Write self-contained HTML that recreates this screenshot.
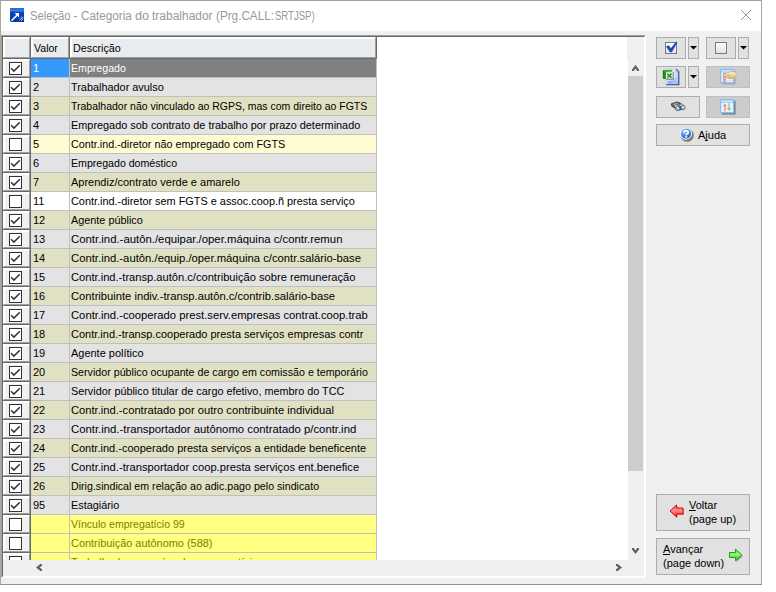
<!DOCTYPE html>
<html><head><meta charset="utf-8">
<style>
*{box-sizing:border-box;margin:0;padding:0}
html,body{width:776px;height:592px;overflow:hidden;background:#fff;font-family:"Liberation Sans",sans-serif;}
.abs{position:absolute}
#win{position:absolute;left:0;top:0;width:762px;height:585px;background:#f0f0f0;}
.bl{position:absolute}
#title{position:absolute;left:1px;top:1px;width:760px;height:30px;background:#fff}
#ttext{position:absolute;left:0;top:8px;font-size:12px;color:#999;white-space:nowrap}
.tw{position:absolute;top:0;transform-origin:0 0}
#grid{position:absolute;left:1px;top:35px;width:645px;height:543px;border-top:1px solid #a0a0a0;border-left:1px solid #a0a0a0;border-right:1px solid #fff;border-bottom:1px solid #fff;}
#gi{position:absolute;left:0;top:0;width:643px;height:541px;border-top:1px solid #696969;border-left:1px solid #696969;border-right:1px solid #fff;border-bottom:1px solid #fff;background:#fff;overflow:hidden}
/* inner origin = (3,37) */
.hd{position:absolute;top:0;height:21px;background:#e9ecef;border-top:1px solid #fff;border-left:1px solid #fff;border-right:1px solid #a0a0a0;border-bottom:1px solid #a0a0a0;box-shadow:1px 1px 0 #696969, 1px 0 0 #696969, 0 1px 0 #696969, inset 1px 1px 0 #fff;font-size:11px;color:#000;}
.hd span{position:absolute;left:2px;top:4px;transform-origin:0 0}
.r{position:absolute;left:0;height:19px;width:373px;font-size:11px}
.r .cbo{position:absolute;left:0;top:0;width:28px;height:19px;border-right:1px solid #696969;border-bottom:1px solid #696969}
.r .cb{position:absolute;left:0;top:0;width:27px;height:18px;background:#f0f0f0;border-top:1px solid #fff;border-left:1px solid #fff;border-right:1px solid #a0a0a0;border-bottom:1px solid #a0a0a0;box-shadow:inset 1px 1px 0 #fff}
.r .cb svg{position:absolute;left:5px;top:2px}
.r .v{position:absolute;left:28px;top:0;width:39px;height:19px;border-right:1px solid #c0c0c0;border-bottom:1px solid #c0c0c0;padding-left:2px;line-height:18px;white-space:nowrap}
.r .d{position:absolute;left:67px;top:0;width:307px;height:19px;border-right:1px solid #c0c0c0;border-bottom:1px solid #c0c0c0;padding-left:1px;line-height:18px;white-space:nowrap;overflow:hidden}
.g .v,.g .d{background:#e3e3e3}
.b .v,.b .d{background:#e0e0c3}
.ly .v,.ly .d{background:#fffcd2}
.w .v,.w .d{background:#fff}
.y .v,.y .d{background:#ffff80;color:#808000}
.sel .v{background:#3399ff;color:#fff}
.sel .d{background:#808080;color:#fff}
.btn{position:absolute;background:#e1e1e1;border:1px solid #adadad}
.dis{position:absolute;background:#cccccc;border:1px solid #c0c0c0}
.r .d span{display:inline-block;transform-origin:0 0}
.lbl{font-size:11px;color:#000;white-space:nowrap}
.lbl u{text-decoration:underline;text-decoration-skip-ink:none;text-underline-offset:1px}
</style></head><body>
<div id="win">
 <div class="bl" style="left:0;top:0;width:762px;height:1px;background:#a0a0a0"></div>
 <div class="bl" style="left:0;top:1px;width:1px;height:584px;background:#a9ab98"></div>
 <div class="bl" style="left:761px;top:1px;width:1px;height:584px;background:#a9ab98"></div>
 <div class="bl" style="left:0;top:584px;width:762px;height:1px;background:#8f8f8f"></div>
 <div id="title">
  <svg class="abs" style="left:9px;top:7px" width="14" height="14" viewBox="0 0 14 14">
   <defs><linearGradient id="ig" x1="0" y1="0" x2="0" y2="1"><stop offset="0" stop-color="#2a66d4"/><stop offset="0.22" stop-color="#3c7ee4"/><stop offset="0.3" stop-color="#0c44bc"/><stop offset="1" stop-color="#0636a8"/></linearGradient></defs>
   <path d="M0 0H14V14H1.5Q0 14 0 12.5Z" fill="url(#ig)"/>
   <path d="M4.6 5H9V9.4Z" fill="#fff"/>
   <path d="M1.4 12.8L7.6 6.6" stroke="#fff" stroke-width="1.5"/>
   <path d="M9.5 12.5L13 9M11 13L13.5 10.5M10 10.5L12 8.5" stroke="#a8c4f4" stroke-width="0.9"/>
  </svg>
  <div id="ttext"><span class="tw" style="left:28.86px;transform:scaleX(0.9366)">Seleção</span><span class="tw" style="left:72.40px;transform:scaleX(1.0)">-</span><span class="tw" style="left:79.52px;transform:scaleX(0.976)">Categoria</span><span class="tw" style="left:134.05px;transform:scaleX(1.0545)">do</span><span class="tw" style="left:150.60px;transform:scaleX(0.9983)">trabalhador</span><span class="tw" style="left:215.02px;transform:scaleX(0.9768)">(Prg.CALL:</span><span class="tw" style="left:273.80px;transform:scaleX(0.7957)">SRTJSP)</span></div>
  <svg class="abs" style="left:740px;top:9px" width="10" height="10" viewBox="0 0 10 10" fill="#969696"><rect x="0" y="0" width="1" height="1"/><rect x="9" y="0" width="1" height="1"/><rect x="1" y="1" width="1" height="1"/><rect x="8" y="1" width="1" height="1"/><rect x="2" y="2" width="1" height="1"/><rect x="7" y="2" width="1" height="1"/><rect x="3" y="3" width="1" height="1"/><rect x="6" y="3" width="1" height="1"/><rect x="4" y="4" width="1" height="1"/><rect x="5" y="4" width="1" height="1"/><rect x="5" y="5" width="1" height="1"/><rect x="4" y="5" width="1" height="1"/><rect x="6" y="6" width="1" height="1"/><rect x="3" y="6" width="1" height="1"/><rect x="7" y="7" width="1" height="1"/><rect x="2" y="7" width="1" height="1"/><rect x="8" y="8" width="1" height="1"/><rect x="1" y="8" width="1" height="1"/><rect x="9" y="9" width="1" height="1"/><rect x="0" y="9" width="1" height="1"/></svg>
 </div>
 <div id="grid"><div id="gi">
  <div class="hd" style="left:0;width:27px"></div>
  <div class="hd" style="left:28px;width:38px"><span style="transform:scaleX(0.96)">Valor</span></div>
  <div class="hd" style="left:67px;width:306px"><span style="transform:scaleX(0.978)">Descrição</span></div>
  <div class="r sel" style="top:22px"><div class="cbo"><div class="cb"><svg width="13" height="13" viewBox="0 0 13 13"><rect x="0.5" y="0.5" width="12" height="12" fill="#fff" stroke="#333"/><path d="M2.1 6.2 L4.9 9.1 L10.8 3.2" fill="none" stroke="#333" stroke-width="1.5"/></svg></div></div><div class="v">1</div><div class="d"><span style="transform:scaleX(0.9643)">Empregado</span></div></div>
<div class="r g" style="top:41px"><div class="cbo"><div class="cb"><svg width="13" height="13" viewBox="0 0 13 13"><rect x="0.5" y="0.5" width="12" height="12" fill="#fff" stroke="#333"/><path d="M2.1 6.2 L4.9 9.1 L10.8 3.2" fill="none" stroke="#333" stroke-width="1.5"/></svg></div></div><div class="v">2</div><div class="d"><span style="transform:scaleX(0.9892)">Trabalhador avulso</span></div></div>
<div class="r b" style="top:60px"><div class="cbo"><div class="cb"><svg width="13" height="13" viewBox="0 0 13 13"><rect x="0.5" y="0.5" width="12" height="12" fill="#fff" stroke="#333"/><path d="M2.1 6.2 L4.9 9.1 L10.8 3.2" fill="none" stroke="#333" stroke-width="1.5"/></svg></div></div><div class="v">3</div><div class="d"><span style="transform:scaleX(0.9532)">Trabalhador não vinculado ao RGPS, mas com direito ao FGTS</span></div></div>
<div class="r g" style="top:79px"><div class="cbo"><div class="cb"><svg width="13" height="13" viewBox="0 0 13 13"><rect x="0.5" y="0.5" width="12" height="12" fill="#fff" stroke="#333"/><path d="M2.1 6.2 L4.9 9.1 L10.8 3.2" fill="none" stroke="#333" stroke-width="1.5"/></svg></div></div><div class="v">4</div><div class="d"><span style="transform:scaleX(0.9897)">Empregado sob contrato de trabalho por prazo determinado</span></div></div>
<div class="r ly" style="top:98px"><div class="cbo"><div class="cb"><svg width="13" height="13" viewBox="0 0 13 13"><rect x="0.5" y="0.5" width="12" height="12" fill="#fff" stroke="#333"/></svg></div></div><div class="v">5</div><div class="d"><span style="transform:scaleX(0.9816)">Contr.ind.-diretor não empregado com FGTS</span></div></div>
<div class="r g" style="top:117px"><div class="cbo"><div class="cb"><svg width="13" height="13" viewBox="0 0 13 13"><rect x="0.5" y="0.5" width="12" height="12" fill="#fff" stroke="#333"/><path d="M2.1 6.2 L4.9 9.1 L10.8 3.2" fill="none" stroke="#333" stroke-width="1.5"/></svg></div></div><div class="v">6</div><div class="d"><span style="transform:scaleX(0.9633)">Empregado doméstico</span></div></div>
<div class="r b" style="top:136px"><div class="cbo"><div class="cb"><svg width="13" height="13" viewBox="0 0 13 13"><rect x="0.5" y="0.5" width="12" height="12" fill="#fff" stroke="#333"/><path d="M2.1 6.2 L4.9 9.1 L10.8 3.2" fill="none" stroke="#333" stroke-width="1.5"/></svg></div></div><div class="v">7</div><div class="d"><span style="transform:scaleX(1.0000)">Aprendiz/contrato verde e amarelo</span></div></div>
<div class="r w" style="top:155px"><div class="cbo"><div class="cb"><svg width="13" height="13" viewBox="0 0 13 13"><rect x="0.5" y="0.5" width="12" height="12" fill="#fff" stroke="#333"/></svg></div></div><div class="v">11</div><div class="d"><span style="transform:scaleX(0.9899)">Contr.ind.-diretor sem FGTS e assoc.coop.ñ presta serviço</span></div></div>
<div class="r b" style="top:174px"><div class="cbo"><div class="cb"><svg width="13" height="13" viewBox="0 0 13 13"><rect x="0.5" y="0.5" width="12" height="12" fill="#fff" stroke="#333"/><path d="M2.1 6.2 L4.9 9.1 L10.8 3.2" fill="none" stroke="#333" stroke-width="1.5"/></svg></div></div><div class="v">12</div><div class="d"><span style="transform:scaleX(0.9861)">Agente público</span></div></div>
<div class="r g" style="top:193px"><div class="cbo"><div class="cb"><svg width="13" height="13" viewBox="0 0 13 13"><rect x="0.5" y="0.5" width="12" height="12" fill="#fff" stroke="#333"/><path d="M2.1 6.2 L4.9 9.1 L10.8 3.2" fill="none" stroke="#333" stroke-width="1.5"/></svg></div></div><div class="v">13</div><div class="d"><span style="transform:scaleX(1.0324)">Contr.ind.-autôn./equipar./oper.máquina c/contr.remun</span></div></div>
<div class="r b" style="top:212px"><div class="cbo"><div class="cb"><svg width="13" height="13" viewBox="0 0 13 13"><rect x="0.5" y="0.5" width="12" height="12" fill="#fff" stroke="#333"/><path d="M2.1 6.2 L4.9 9.1 L10.8 3.2" fill="none" stroke="#333" stroke-width="1.5"/></svg></div></div><div class="v">14</div><div class="d"><span style="transform:scaleX(1.0267)">Contr.ind.-autôn./equip./oper.máquina c/contr.salário-base</span></div></div>
<div class="r g" style="top:231px"><div class="cbo"><div class="cb"><svg width="13" height="13" viewBox="0 0 13 13"><rect x="0.5" y="0.5" width="12" height="12" fill="#fff" stroke="#333"/><path d="M2.1 6.2 L4.9 9.1 L10.8 3.2" fill="none" stroke="#333" stroke-width="1.5"/></svg></div></div><div class="v">15</div><div class="d"><span style="transform:scaleX(1.0114)">Contr.ind.-transp.autôn.c/contribuição sobre remuneração</span></div></div>
<div class="r b" style="top:250px"><div class="cbo"><div class="cb"><svg width="13" height="13" viewBox="0 0 13 13"><rect x="0.5" y="0.5" width="12" height="12" fill="#fff" stroke="#333"/><path d="M2.1 6.2 L4.9 9.1 L10.8 3.2" fill="none" stroke="#333" stroke-width="1.5"/></svg></div></div><div class="v">16</div><div class="d"><span style="transform:scaleX(1.0171)">Contribuinte indiv.-transp.autôn.c/contrib.salário-base</span></div></div>
<div class="r g" style="top:269px"><div class="cbo"><div class="cb"><svg width="13" height="13" viewBox="0 0 13 13"><rect x="0.5" y="0.5" width="12" height="12" fill="#fff" stroke="#333"/><path d="M2.1 6.2 L4.9 9.1 L10.8 3.2" fill="none" stroke="#333" stroke-width="1.5"/></svg></div></div><div class="v">17</div><div class="d"><span style="transform:scaleX(1.0228)">Contr.ind.-cooperado prest.serv.empresas contrat.coop.trab</span></div></div>
<div class="r b" style="top:288px"><div class="cbo"><div class="cb"><svg width="13" height="13" viewBox="0 0 13 13"><rect x="0.5" y="0.5" width="12" height="12" fill="#fff" stroke="#333"/><path d="M2.1 6.2 L4.9 9.1 L10.8 3.2" fill="none" stroke="#333" stroke-width="1.5"/></svg></div></div><div class="v">18</div><div class="d"><span style="transform:scaleX(1.0003)">Contr.ind.-transp.cooperado presta serviços empresas contr</span></div></div>
<div class="r g" style="top:307px"><div class="cbo"><div class="cb"><svg width="13" height="13" viewBox="0 0 13 13"><rect x="0.5" y="0.5" width="12" height="12" fill="#fff" stroke="#333"/><path d="M2.1 6.2 L4.9 9.1 L10.8 3.2" fill="none" stroke="#333" stroke-width="1.5"/></svg></div></div><div class="v">19</div><div class="d"><span style="transform:scaleX(0.9973)">Agente político</span></div></div>
<div class="r b" style="top:326px"><div class="cbo"><div class="cb"><svg width="13" height="13" viewBox="0 0 13 13"><rect x="0.5" y="0.5" width="12" height="12" fill="#fff" stroke="#333"/><path d="M2.1 6.2 L4.9 9.1 L10.8 3.2" fill="none" stroke="#333" stroke-width="1.5"/></svg></div></div><div class="v">20</div><div class="d"><span style="transform:scaleX(0.9710)">Servidor público ocupante de cargo em comissão e temporário</span></div></div>
<div class="r g" style="top:345px"><div class="cbo"><div class="cb"><svg width="13" height="13" viewBox="0 0 13 13"><rect x="0.5" y="0.5" width="12" height="12" fill="#fff" stroke="#333"/><path d="M2.1 6.2 L4.9 9.1 L10.8 3.2" fill="none" stroke="#333" stroke-width="1.5"/></svg></div></div><div class="v">21</div><div class="d"><span style="transform:scaleX(0.9855)">Servidor público titular de cargo efetivo, membro do TCC</span></div></div>
<div class="r b" style="top:364px"><div class="cbo"><div class="cb"><svg width="13" height="13" viewBox="0 0 13 13"><rect x="0.5" y="0.5" width="12" height="12" fill="#fff" stroke="#333"/><path d="M2.1 6.2 L4.9 9.1 L10.8 3.2" fill="none" stroke="#333" stroke-width="1.5"/></svg></div></div><div class="v">22</div><div class="d"><span style="transform:scaleX(1.0163)">Contr.ind.-contratado por outro contribuinte individual</span></div></div>
<div class="r g" style="top:383px"><div class="cbo"><div class="cb"><svg width="13" height="13" viewBox="0 0 13 13"><rect x="0.5" y="0.5" width="12" height="12" fill="#fff" stroke="#333"/><path d="M2.1 6.2 L4.9 9.1 L10.8 3.2" fill="none" stroke="#333" stroke-width="1.5"/></svg></div></div><div class="v">23</div><div class="d"><span style="transform:scaleX(1.0297)">Contr.ind.-transportador autônomo contratado p/contr.ind</span></div></div>
<div class="r b" style="top:402px"><div class="cbo"><div class="cb"><svg width="13" height="13" viewBox="0 0 13 13"><rect x="0.5" y="0.5" width="12" height="12" fill="#fff" stroke="#333"/><path d="M2.1 6.2 L4.9 9.1 L10.8 3.2" fill="none" stroke="#333" stroke-width="1.5"/></svg></div></div><div class="v">24</div><div class="d"><span style="transform:scaleX(1.0034)">Contr.ind.-cooperado presta serviços a entidade beneficente</span></div></div>
<div class="r g" style="top:421px"><div class="cbo"><div class="cb"><svg width="13" height="13" viewBox="0 0 13 13"><rect x="0.5" y="0.5" width="12" height="12" fill="#fff" stroke="#333"/><path d="M2.1 6.2 L4.9 9.1 L10.8 3.2" fill="none" stroke="#333" stroke-width="1.5"/></svg></div></div><div class="v">25</div><div class="d"><span style="transform:scaleX(1.0177)">Contr.ind.-transportador coop.presta serviços ent.benefice</span></div></div>
<div class="r b" style="top:440px"><div class="cbo"><div class="cb"><svg width="13" height="13" viewBox="0 0 13 13"><rect x="0.5" y="0.5" width="12" height="12" fill="#fff" stroke="#333"/><path d="M2.1 6.2 L4.9 9.1 L10.8 3.2" fill="none" stroke="#333" stroke-width="1.5"/></svg></div></div><div class="v">26</div><div class="d"><span style="transform:scaleX(0.9682)">Dirig.sindical em relação ao adic.pago pelo sindicato</span></div></div>
<div class="r g" style="top:459px"><div class="cbo"><div class="cb"><svg width="13" height="13" viewBox="0 0 13 13"><rect x="0.5" y="0.5" width="12" height="12" fill="#fff" stroke="#333"/><path d="M2.1 6.2 L4.9 9.1 L10.8 3.2" fill="none" stroke="#333" stroke-width="1.5"/></svg></div></div><div class="v">95</div><div class="d"><span style="transform:scaleX(0.9877)">Estagiário</span></div></div>
<div class="r y" style="top:478px"><div class="cbo"><div class="cb"><svg width="13" height="13" viewBox="0 0 13 13"><rect x="0.5" y="0.5" width="12" height="12" fill="#fff" stroke="#333"/></svg></div></div><div class="v"></div><div class="d"><span style="transform:scaleX(0.9581)">Vínculo empregatício 99</span></div></div>
<div class="r y" style="top:497px"><div class="cbo"><div class="cb"><svg width="13" height="13" viewBox="0 0 13 13"><rect x="0.5" y="0.5" width="12" height="12" fill="#fff" stroke="#333"/></svg></div></div><div class="v"></div><div class="d"><span style="transform:scaleX(0.9929)">Contribuição autônomo (588)</span></div></div>
<div class="r y" style="top:516px"><div class="cbo"><div class="cb"><svg width="13" height="13" viewBox="0 0 13 13"><rect x="0.5" y="0.5" width="12" height="12" fill="#fff" stroke="#333"/></svg></div></div><div class="v"></div><div class="d"><span style="transform:scaleX(1.0000)">Trabalhador com vínculo empregatício</span></div></div>
  <!-- vertical scrollbar -->
  <div class="abs" style="left:624px;top:0;width:17px;height:22px;background:#f0f0f0"></div>
  <div class="abs" style="left:625px;top:22px;width:16px;height:501px;background:#f0f0f0"></div>
  <div class="abs" style="left:625px;top:39px;width:15px;height:395px;background:#cdcdcd"></div>
  <!-- horizontal scrollbar -->
  <div class="abs" style="left:0;top:523px;width:641px;height:16px;background:#f0f0f0"></div>
 </div></div>
 <!-- right panel buttons -->
 <div class="btn" style="left:656px;top:37px;width:30px;height:22px"></div>
 <div class="btn" style="left:688px;top:37px;width:11px;height:22px"></div>
 <div class="btn" style="left:706px;top:37px;width:30px;height:22px"></div>
 <div class="btn" style="left:738px;top:37px;width:11px;height:22px"></div>
 <div class="btn" style="left:656px;top:66px;width:30px;height:22px"></div>
 <div class="btn" style="left:688px;top:66px;width:11px;height:22px"></div>
 <div class="dis" style="left:706px;top:66px;width:44px;height:22px"></div>
 <div class="btn" style="left:656px;top:96px;width:44px;height:22px"></div>
 <div class="dis" style="left:706px;top:96px;width:44px;height:22px"></div>
 <div class="btn" style="left:656px;top:124px;width:94px;height:22px"></div>
 <div class="btn" style="left:656px;top:494px;width:94px;height:37px"></div>
 <div class="btn" style="left:656px;top:538px;width:94px;height:37px"></div>
 <!-- dropdown triangles -->
 <svg class="abs" style="left:690px;top:46px" width="8" height="5" viewBox="0 0 8 5"><path d="M0 0H7L3.5 3.5Z" fill="#000"/></svg>
 <svg class="abs" style="left:740px;top:46px" width="8" height="5" viewBox="0 0 8 5"><path d="M0 0H7L3.5 3.5Z" fill="#000"/></svg>
 <svg class="abs" style="left:690px;top:75px" width="8" height="5" viewBox="0 0 8 5"><path d="M0 0H7L3.5 3.5Z" fill="#000"/></svg>
 <!-- check all icon -->
 <svg class="abs" style="left:664px;top:40px" width="16" height="16" viewBox="0 0 16 16">
  <defs><linearGradient id="cbg" x1="0" y1="0" x2="0" y2="1"><stop offset="0" stop-color="#fff"/><stop offset="1" stop-color="#e0e0e0"/></linearGradient></defs>
  <rect x="1.5" y="2.5" width="11" height="11" fill="url(#cbg)" stroke="#7a7a7a"/>
  <path d="M2.3 7.0Q3.1 5.0 5.0 5.7L6.9 8.2L11.7 2.1Q12.9 1.4 13.2 2.8L8.1 11.8Q6.9 13.1 5.7 11.8Z" fill="#1848c0"/>
 </svg>
 <!-- uncheck all icon -->
 <svg class="abs" style="left:714px;top:40px" width="16" height="16" viewBox="0 0 16 16">
  <rect x="1.5" y="2.5" width="11" height="11" fill="url(#cbg)" stroke="#7a7a7a"/>
 </svg>
 <!-- excel icon -->
 <svg class="abs" style="left:660px;top:66px" width="22" height="22" viewBox="0 0 22 22">
  <defs><linearGradient id="xg" x1="0" y1="0" x2="0.6" y2="1"><stop offset="0" stop-color="#f8fbff"/><stop offset="1" stop-color="#a8c4ee"/></linearGradient>
  <linearGradient id="gg" x1="0" y1="0" x2="1" y2="0"><stop offset="0" stop-color="#0a7a0a"/><stop offset="0.5" stop-color="#48b048"/><stop offset="1" stop-color="#80d080"/></linearGradient></defs>
  <path d="M6.2 3.2H16.4L19 5.8V19H6.2Z" fill="url(#xg)"/>
  <path d="M6.2 19V3.2H16" stroke="#c0d4ee" stroke-width="0.8" fill="none"/>
  <path d="M16.2 3.2L18.8 5.8V18.8H6.2" stroke="#2a4a88" stroke-width="1.1" fill="none"/>
  <path d="M16.2 3.6V6H18.6Z" fill="#fff" stroke="#50609a" stroke-width="0.5"/>
  <rect x="13.6" y="7.6" width="1.2" height="1.2" fill="#fff"/><rect x="13.6" y="10.2" width="1.2" height="1.2" fill="#fff"/>
  <path d="M15.2 12.5V15.6H8M8.5 15.5H12.5" stroke="#90b4e4" stroke-width="0.9" fill="none"/>
  <path d="M8 16.8H12.5" stroke="#7aa0dc" stroke-width="1" fill="none"/>
  <rect x="2.8" y="3.9" width="9.4" height="9" rx="0.8" fill="url(#gg)"/>
  <rect x="4" y="3.9" width="8.2" height="1.3" fill="#3cb03c"/>
  <rect x="6" y="6.2" width="7" height="6.8" fill="#e6f6d8"/>
  <path d="M13.2 6.2V13.2H6" stroke="#5a5a5a" stroke-width="0.8" fill="none"/>
  <path d="M7.3 7.6L11.6 11.8M11.6 7.6L7.3 11.8" stroke="#2c8c2c" stroke-width="1.5"/>
 </svg>
 <!-- table hand icon (disabled) -->
 <svg class="abs" style="left:719px;top:68px" width="19" height="18" viewBox="0 0 19 18">
  <defs><linearGradient id="hdg" x1="0" y1="0" x2="0" y2="1"><stop offset="0" stop-color="#fff4d8"/><stop offset="0.5" stop-color="#ecd49c"/><stop offset="1" stop-color="#d4b474"/></linearGradient></defs>
  <rect x="2.5" y="2.5" width="14" height="14" rx="1.5" fill="#505050" opacity="0.3"/>
  <rect x="1.6" y="1.6" width="13.2" height="13.2" rx="1" fill="#f6f4ff" stroke="#7cc4f8" stroke-width="1.4"/>
  <rect x="2.4" y="2.4" width="11.6" height="2.4" fill="#98d0fa"/>
  <rect x="3" y="2.6" width="10" height="0.8" fill="#e8f6ff"/>
  <rect x="4" y="5" width="3" height="9.4" fill="#f49078"/>
  <path d="M2.4 7.6H14M2.4 10.1H14M2.4 12.6H14" stroke="#d4cce8" stroke-width="0.7"/>
  <path d="M10.5 5V14.4" stroke="#e0dcf0" stroke-width="0.6"/>
  <path d="M4.6 6.6Q5.4 5.4 7.5 5.2L10 4.2Q12.5 3 14.5 3.6Q17.2 4.2 17.4 6.6Q17.2 9.6 14.6 10.6L10.5 10.8Q8.6 10.4 7.8 9.2L5.6 8.0Q4.3 7.6 4.6 6.6Z" fill="url(#hdg)" stroke="#c8a868" stroke-width="0.6"/>
  <path d="M8 7.2Q10 6.6 11.6 7.6M8.6 8.8Q10.4 8.4 12 9.2" stroke="#c8a868" stroke-width="0.5" fill="none"/>
 </svg>
 <!-- binoculars -->
 <svg class="abs" style="left:668px;top:98px" width="20" height="16" viewBox="0 0 20 16">
  <defs><radialGradient id="lg" cx="0.6" cy="0.3" r="0.7"><stop offset="0" stop-color="#e8f4ff"/><stop offset="0.6" stop-color="#8cc4f8"/><stop offset="1" stop-color="#5a9ae0"/></radialGradient></defs>
  <path d="M2.8 6.4Q2.8 5.4 4 5L8.6 3.6L11.2 4L16.2 7.2L16.6 10.6L12 12.4L9.4 12.6L4 8.8Q2.8 7.6 2.8 6.4Z" fill="#555"/>
  <path d="M4.2 6.2L8.8 4.6L10.6 5.2L8.6 6.6L7.4 8Z" fill="#9a9a9a"/>
  <path d="M9.8 5.6L13.2 7.4L11.6 8.4L10.2 7.6Z" fill="#8a8a8a"/>
  <path d="M6.4 7.8L9.4 7.3L10 8.5L7.6 9Z" fill="#fff"/>
  <path d="M11.8 6.8L14.6 6.4L15 7.5L12.8 7.9Z" fill="#fff"/>
  <circle cx="9.6" cy="10.5" r="2.2" fill="url(#lg)" stroke="#404040" stroke-width="0.5"/>
  <circle cx="15" cy="9.6" r="2.2" fill="url(#lg)" stroke="#404040" stroke-width="0.5"/>
 </svg>
 <!-- sort icon (disabled) -->
 <svg class="abs" style="left:719px;top:98px" width="18" height="18" viewBox="0 0 18 18">
  <rect x="2.6" y="2.6" width="14" height="14" rx="1" fill="#383838" opacity="0.55"/>
  <rect x="1.6" y="1.6" width="13" height="13" rx="0.6" fill="#f2f0fc" stroke="#7cc4f8" stroke-width="1.3"/>
  <rect x="2.2" y="2.2" width="11.8" height="2.6" fill="#8ccaf8"/>
  <rect x="2.8" y="2.8" width="10.6" height="1" fill="#dcf0ff"/>
  <path d="M10.8 5V14" stroke="#e4e0f4" stroke-width="0.5"/>
  <path d="M5.9 13.6V7" stroke="#f4a8a8" stroke-width="2"/><path d="M3.6 8.3L5.9 5.6L8.2 8.3Z" fill="#f48a8a"/>
  <path d="M10 5V11.4" stroke="#a8dca8" stroke-width="2"/><path d="M7.7 10.3L10 13.1L12.3 10.3Z" fill="#7ccc7c"/>
 </svg>
 <!-- help icon -->
 <svg class="abs" style="left:678px;top:126px" width="18" height="18" viewBox="0 0 18 18">
  <defs><radialGradient id="hg" cx="0.35" cy="0.3" r="0.8"><stop offset="0" stop-color="#a8d8ff"/><stop offset="0.45" stop-color="#3e90ea"/><stop offset="1" stop-color="#1c5cc0"/></radialGradient>
  <radialGradient id="hs" cx="0.5" cy="0.5" r="0.5"><stop offset="0.7" stop-color="#303030" stop-opacity="0.7"/><stop offset="1" stop-color="#303030" stop-opacity="0"/></radialGradient></defs>
  <circle cx="9.2" cy="9.3" r="7.4" fill="url(#hs)"/>
  <circle cx="8" cy="7.8" r="6.1" fill="#f6f4f0"/>
  <circle cx="8" cy="7.8" r="5" fill="url(#hg)"/>
  <path d="M6.1 6.6Q6.1 4.7 8.1 4.7Q10.2 4.7 10.2 6.4Q10.2 7.4 9.0 8.0Q8.2 8.4 8.2 9.3" fill="none" stroke="#fff" stroke-width="1.8"/>
  <rect x="7.3" y="10.1" width="1.8" height="1.6" fill="#fff"/>
 </svg>
 <div class="abs lbl" style="left:698px;top:129px">A<u>j</u>uda</div>
 <!-- red arrow -->
 <svg class="abs" style="left:668px;top:503px" width="18" height="16" viewBox="0 0 18 16">
  <defs><linearGradient id="rg" x1="0" y1="0" x2="0" y2="1"><stop offset="0" stop-color="#ff5050"/><stop offset="0.45" stop-color="#ff9090"/><stop offset="1" stop-color="#ff1818"/></linearGradient>
  <linearGradient id="grg" x1="0" y1="0" x2="0" y2="1"><stop offset="0" stop-color="#60e040"/><stop offset="0.45" stop-color="#98f878"/><stop offset="1" stop-color="#30b020"/></linearGradient></defs>
  <path d="M3 9L9.5 3V6H16V12H9.5V15Z" fill="#600000" opacity="0.35"/>
  <path d="M2 8L8.5 2V5H15V11H8.5V14Z" fill="url(#rg)" stroke="#f00000" stroke-width="1"/>
 </svg>
 <div class="abs lbl" style="left:689px;top:498px;line-height:14px"><u>V</u>oltar<br>(page up)</div>
 <div class="abs lbl" style="left:663px;top:542px;line-height:14px"><u>A</u>vançar<br>(page down)</div>
 <!-- green arrow -->
 <svg class="abs" style="left:727px;top:547px" width="18" height="16" viewBox="0 0 18 16">
  <path d="M3 7H9.5V3L16 9L9.5 15V11H3Z" fill="#003000" opacity="0.35"/>
  <path d="M2.5 5.5H8.5V2.2L14.8 8L8.5 13.8V10.5H2.5Z" fill="url(#grg)" stroke="#18a018" stroke-width="1"/>
 </svg>
</div>
<svg class="abs" style="left:0;top:0" width="776" height="592" viewBox="0 0 776 592" fill="#606060">
 <path d="M632 548H633.8L635.5 550.4L637.2 548H639V549.6L635.5 554L632 549.6Z"/>
 <path d="M632 71H633.8L635.5 68.6L637.2 71H639V69.4L635.5 65L632 69.4Z"/>
 <path d="M42 564V565.8L39.6 567.5L42 569.2V571H40.4L36 567.5L40.4 564Z"/>
 <path d="M616 564V565.8L618.4 567.5L616 569.2V571H617.6L622 567.5L617.6 564Z"/>
</svg>
</body></html>
